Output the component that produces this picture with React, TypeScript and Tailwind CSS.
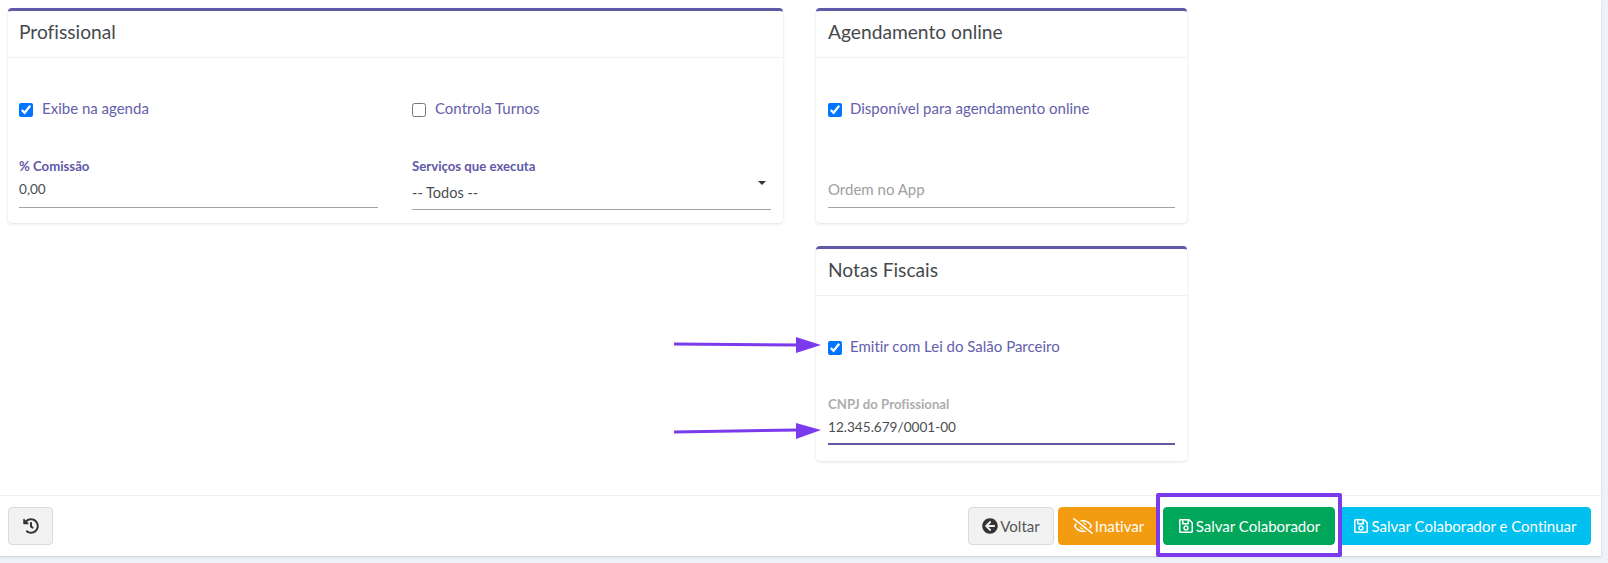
// App.tsx
import React from 'react';
import { FaArrowCircleLeft, FaHistory, FaRegEyeSlash, FaRegSave } from 'react-icons/fa';

const Card: React.FC<{ title: string; className?: string; titleClass?: string; children: React.ReactNode }> = ({
  title,
  className,
  titleClass,
  children,
}) => (
  <section className={`rounded-[4px] border-t-[3px] border-[#5f59a8] bg-white shadow-[0_1px_3px_rgba(0,0,0,0.12)] ${className ?? ''}`}>
    <h3 className={`flex h-[47px] items-center border-b border-[#f1f1f3] pb-[3px] text-[19.2px] font-normal text-[#45494d] ${titleClass ?? 'px-[11px]'}`}>
      {title}
    </h3>
    {children}
  </section>
);

const Check: React.FC<{ label: string; checked?: boolean; gap?: string }> = ({ label, checked, gap }) => (
  <label className={`flex h-5 items-center pb-[2px] text-[15px] text-[#6560ab] ${gap ?? 'gap-[9px]'}`}>
    <input type="checkbox" defaultChecked={checked} className="mt-[4px] h-[14px] w-[14px] accent-[#0075ff]" />
    {label}
  </label>
);

const Field: React.FC<{ label?: string; value: string; muted?: boolean; labelMuted?: boolean; active?: boolean }> = ({
  label,
  value,
  muted,
  labelMuted,
  active,
}) => (
  <div>
    <div className={`h-4 text-[13.2px] leading-4 font-bold ${labelMuted ? 'text-[#adadad]' : 'text-[#5f59a8]'}`}>{label}</div>
    <div
      className={`flex items-center ${muted ? 'text-[15px] text-[#a0a0a0]' : 'text-[13.6px] text-[#4a4d50]'} ${
        active ? 'h-[33px] border-b-2 border-[#5f59a8]' : 'h-[34px] border-b border-[#a3a3a3] pb-[3px]'
      }`}
    >
      {value}
    </div>
  </div>
);

const Arrow: React.FC<{ className: string; y1: number; y2: number }> = ({ className, y1, y2 }) => (
  <svg className={`pointer-events-none absolute ${className}`} width="150" height="18" viewBox="0 0 150 18">
    <path d={`M0 ${y1} L124 ${y2}`} stroke="#7c3aed" strokeWidth="3" fill="none" />
    <path d={`M122 1 L147 ${y2} L122 17 Z`} fill="#7c3aed" />
  </svg>
);

const btn = 'flex h-[38px] items-center justify-center gap-[2px] rounded-[4px] border text-[15px]';

export default function App() {
  return (
    <div className="h-screen overflow-hidden bg-[#eef1f6] font-['Lato','Noto_Sans',sans-serif] [font-variant-ligatures:none]">
      <div className="relative flex h-[556px] w-[1601px] flex-col bg-white shadow-[0_1px_2px_rgba(0,0,0,0.15)]">
        <div className="flex flex-1 gap-[33px] pt-2 pl-2">
          <Card title="Profissional" className="h-[215px] w-[775px]">
            <div className="px-[11px] pt-[41px]">
              <div className="grid grid-cols-[359px_359px] gap-x-[34px]">
                <Check label="Exibe na agenda" checked />
                <Check label="Controla Turnos" />
              </div>
              <div className="mt-[39px] grid grid-cols-[359px_359px] items-start gap-x-[34px]">
                <Field label="% Comissão" value="0,00" />
                <div className="relative">
                  <div className="h-4 text-[13.2px] leading-4 font-bold text-[#5f59a8]">Serviços que executa</div>
                  <div className="flex h-[36px] items-center border-b border-[#a3a3a3] pt-[2px] text-[14.5px] text-[#4a4d50]">-- Todos --</div>
                  <span className="absolute top-[23px] right-[5px] h-0 w-0 border-x-[4px] border-t-[4px] border-x-transparent border-t-[#333]" />
                </div>
              </div>
            </div>
          </Card>
          <div className="flex w-[371px] flex-col gap-[23px]">
            <Card title="Agendamento online" titleClass="px-[12px]" className="h-[215px]">
              <div className="px-[12px] pt-[41px]">
                <Check label="Disponível para agendamento online" checked gap="gap-[8px]" />
                <div className="mt-[39px]">
                  <Field value="Ordem no App" muted />
                </div>
              </div>
            </Card>
            <Card title="Notas Fiscais" titleClass="px-[12px]" className="h-[215px]">
              <div className="px-[12px] pt-[41px]">
                <Check label="Emitir com Lei do Salão Parceiro" checked gap="gap-[8px]" />
                <div className="mt-[39px]">
                  <Field label="CNPJ do Profissional" value="12.345.679/0001-00" labelMuted active />
                </div>
              </div>
            </Card>
          </div>
        </div>

        <footer className="flex h-[61px] items-center justify-between border-t border-[#f0f0f2] pr-[10px] pl-2">
          <button className={`${btn} w-[45px] border-[#dcdcdc] bg-[#f2f2f2] text-[#333]`}>
            <FaHistory className="text-[16px]" />
          </button>
          <div className="flex gap-[4px]">
            <button className={`${btn} w-[86px] border-[#dcdcdc] bg-[#f2f2f2] text-[#555]`}>
              <FaArrowCircleLeft className="text-[16px] text-[#333]" /> Voltar
            </button>
            <button className={`${btn} w-[101px] border-[#f39c12] bg-[#f39c12] text-white`}>
              <FaRegEyeSlash className="text-[20px]" /> Inativar
            </button>
            <button className={`${btn} w-[172px] border-[#00a65a] bg-[#00a65a] text-white`}>
              <FaRegSave className="text-[16px]" /> Salvar Colaborador
            </button>
            <button className={`${btn} w-[252px] border-[#00c0ef] bg-[#00c0ef] text-white`}>
              <FaRegSave className="text-[16px]" /> Salvar Colaborador e Continuar
            </button>
          </div>
        </footer>

        {/* anotacoes */}
        <Arrow className="top-[336px] left-[674px]" y1={8} y2={9} />
        <Arrow className="top-[422px] left-[674px]" y1={10} y2={8} />
        <div className="pointer-events-none absolute top-[493px] left-[1156px] h-[64px] w-[186px] rounded-[2px] border-[4px] border-[#7c3aed]" />
      </div>
    </div>
  );
}
